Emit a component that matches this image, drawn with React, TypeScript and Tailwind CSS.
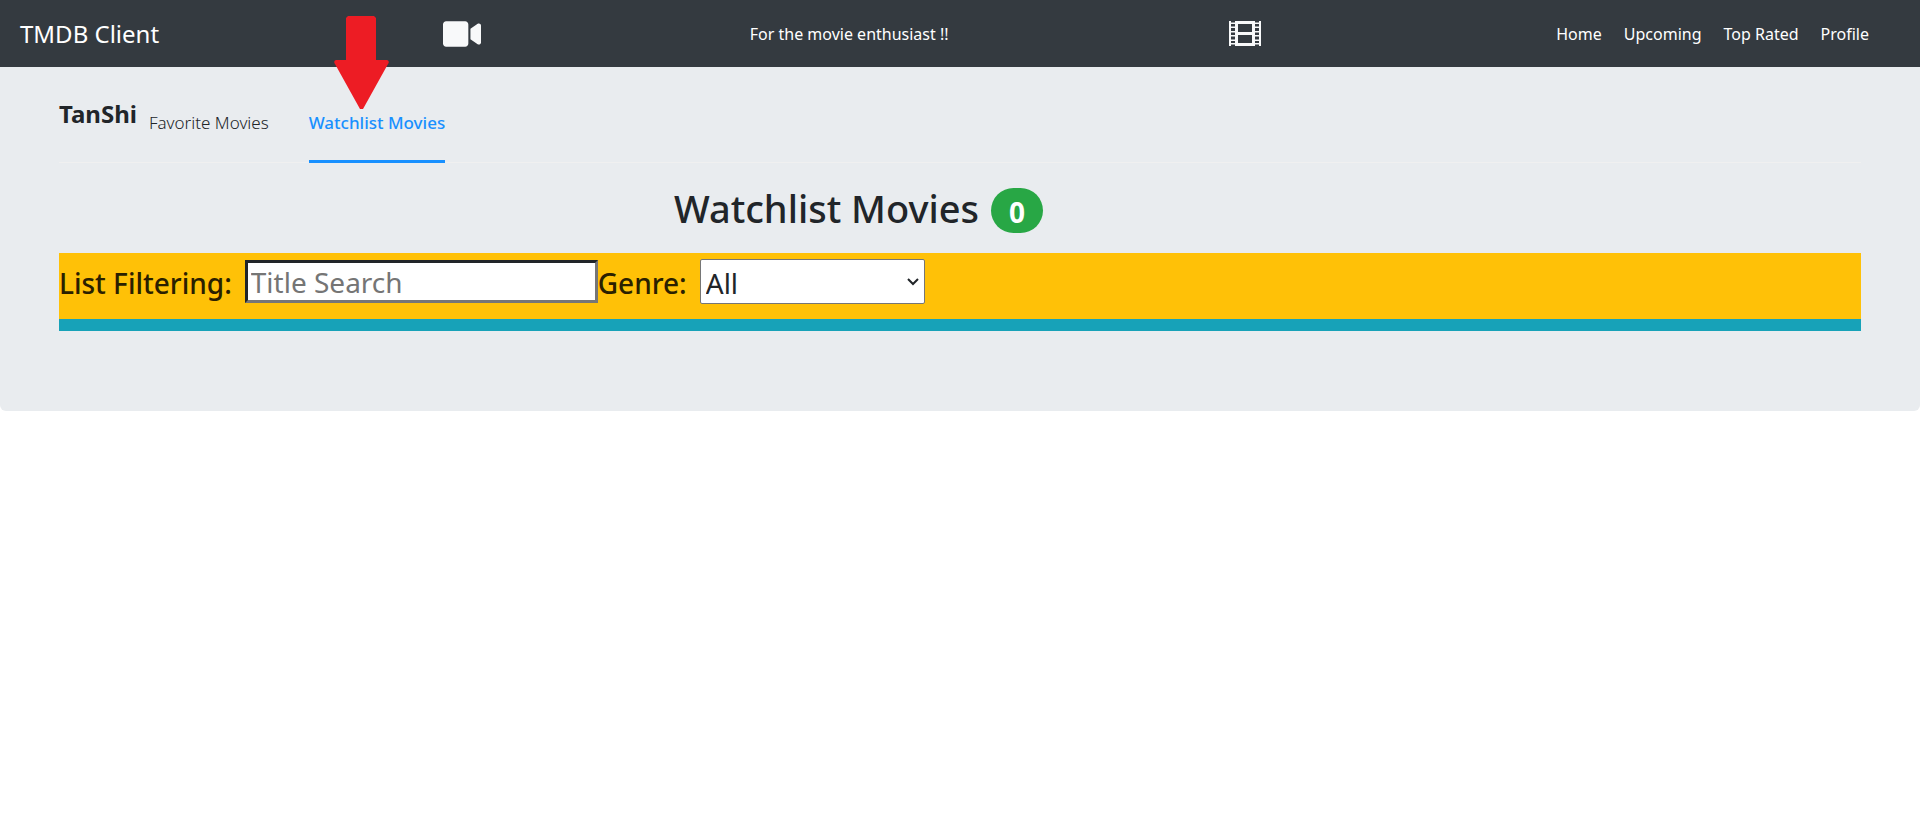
import { useState } from "react";
import { FaVideo } from "react-icons/fa";

const links = ["Home", "Upcoming", "Top Rated", "Profile"];
const genres = ["All", "Action", "Adventure", "Animation", "Comedy", "Drama", "Science Fiction"];

function FilmIcon() {
  return (
    <svg viewBox="0 0 32 25" className="h-[25px] w-8 shrink-0" fill="#f8f9fa" role="img" aria-label="Film">
      <path
        fillRule="evenodd"
        d="M0 0h2v1.500h4V0h20v1.500h4V0h2v25h-2v-1.500h-4V25H6v-1.500H2V25H0zM2 3v2.500h4V3zM2 7v3h4V7zM2 11.500v2.500h4v-2.500zM2 15.500v3h4v-3zM2 20v2h4v-2zM26 3v2.500h4V3zM26 7v3h4V7zM26 11.500v2.500h4v-2.500zM26 15.500v3h4v-3zM26 20v2h4v-2zM9 3v8h14V3zM9 14v8h14v-8z"
      />
    </svg>
  );
}

function Header() {
  return (
    <header className="flex h-[67px] items-center justify-between bg-[#343a40] px-5 text-base text-white">
      <a href="#home" className="mr-4 text-2xl">TMDB Client</a>
      <FaVideo className="h-[34px] w-[38px] shrink-0 text-[#f8f9fa]" aria-label="Camera" />
      <span className="mr-3 pt-px">For the movie enthusiast !!</span>
      <FilmIcon />
      <nav className="mr-5 ml-4 flex pt-px">
        {links.map((link) => (
          <a key={link} href="#nav" className="px-[11px] py-2">{link}</a>
        ))}
      </nav>
    </header>
  );
}

export default function App() {
  const [title, setTitle] = useState("");
  const [genre, setGenre] = useState("All");

  return (
    <div className="relative font-['Noto_Sans','Open_Sans',sans-serif] text-[#212529]">
      <Header />
      <main className="rounded-b-md bg-[#e9ecef] px-[59px] pb-20">
        <div className="flex h-24 items-start border-b border-[#f0f0f0] text-[17px]">
          <h1 className="mr-3 pt-[27px] text-2xl leading-10 font-bold">TanShi</h1>
          <div role="tablist" className="-mb-px flex h-24 gap-10">
            <button type="button" role="tab" aria-selected="false" className="border-b-3 border-transparent pt-[18px] font-light">
              Favorite Movies
            </button>
            <button type="button" role="tab" aria-selected="true" className="border-b-3 border-[#1890ff] pt-[18px] font-medium text-[#1890ff]">
              Watchlist Movies
            </button>
          </div>
        </div>
        <h2 className="mt-4 mr-[203px] flex items-center justify-center gap-3 text-[38px] leading-[58px] font-medium">
          Watchlist Movies
          <span className="mt-1 flex h-[45px] items-center rounded-full bg-[#28a745] px-[18px] pt-[3px] text-[28px] font-bold text-white">0</span>
        </h2>
        <form className="mt-4 flex h-[66px] items-start bg-[#ffc107] pt-[6px] text-[28px] leading-[48px] font-medium text-[#2a2000]">
          <label htmlFor="title" className="mr-[13px]">List Filtering:</label>
          <input
            id="title"
            value={title}
            onChange={(e) => setTitle(e.target.value)}
            placeholder="Title Search"
            className="mt-px h-[43px] w-[353px] border-3 border-t-[#212529] border-r-[#767676] border-b-[#767676] border-l-[#212529] bg-white px-[3px] font-normal placeholder:text-[#757575]"
          />
          <label htmlFor="genre" className="mr-[13px]">Genre:</label>
          <div className="relative">
            <select
              id="genre"
              value={genre}
              onChange={(e) => setGenre(e.target.value)}
              className="block h-[45px] w-[225px] appearance-none rounded-xs border border-[#767676] bg-white px-[5px] pt-[2px] text-[28px] leading-10 font-normal text-[#212529]"
            >
              {genres.map((g) => (
                <option key={g}>{g}</option>
              ))}
            </select>
            <svg viewBox="0 0 12 8" className="pointer-events-none absolute top-[19px] right-[6px] h-2 w-3" fill="none" stroke="#212529" strokeWidth="2" aria-hidden="true">
              <path d="M1 1l5 5 5-5" />
            </svg>
          </div>
        </form>
        <div className="h-3 bg-[#17a2b8]" />
      </main>
      <svg viewBox="0 0 56 94" className="absolute top-4 left-[334px] h-[94px] w-14" fill="#ed1c24" aria-hidden="true">
        <path d="M14 0h26l2 2v42h11q3 1 1 4L29 93h-3L1 48q-2-3 1-4h10V2z" />
      </svg>
    </div>
  );
}
